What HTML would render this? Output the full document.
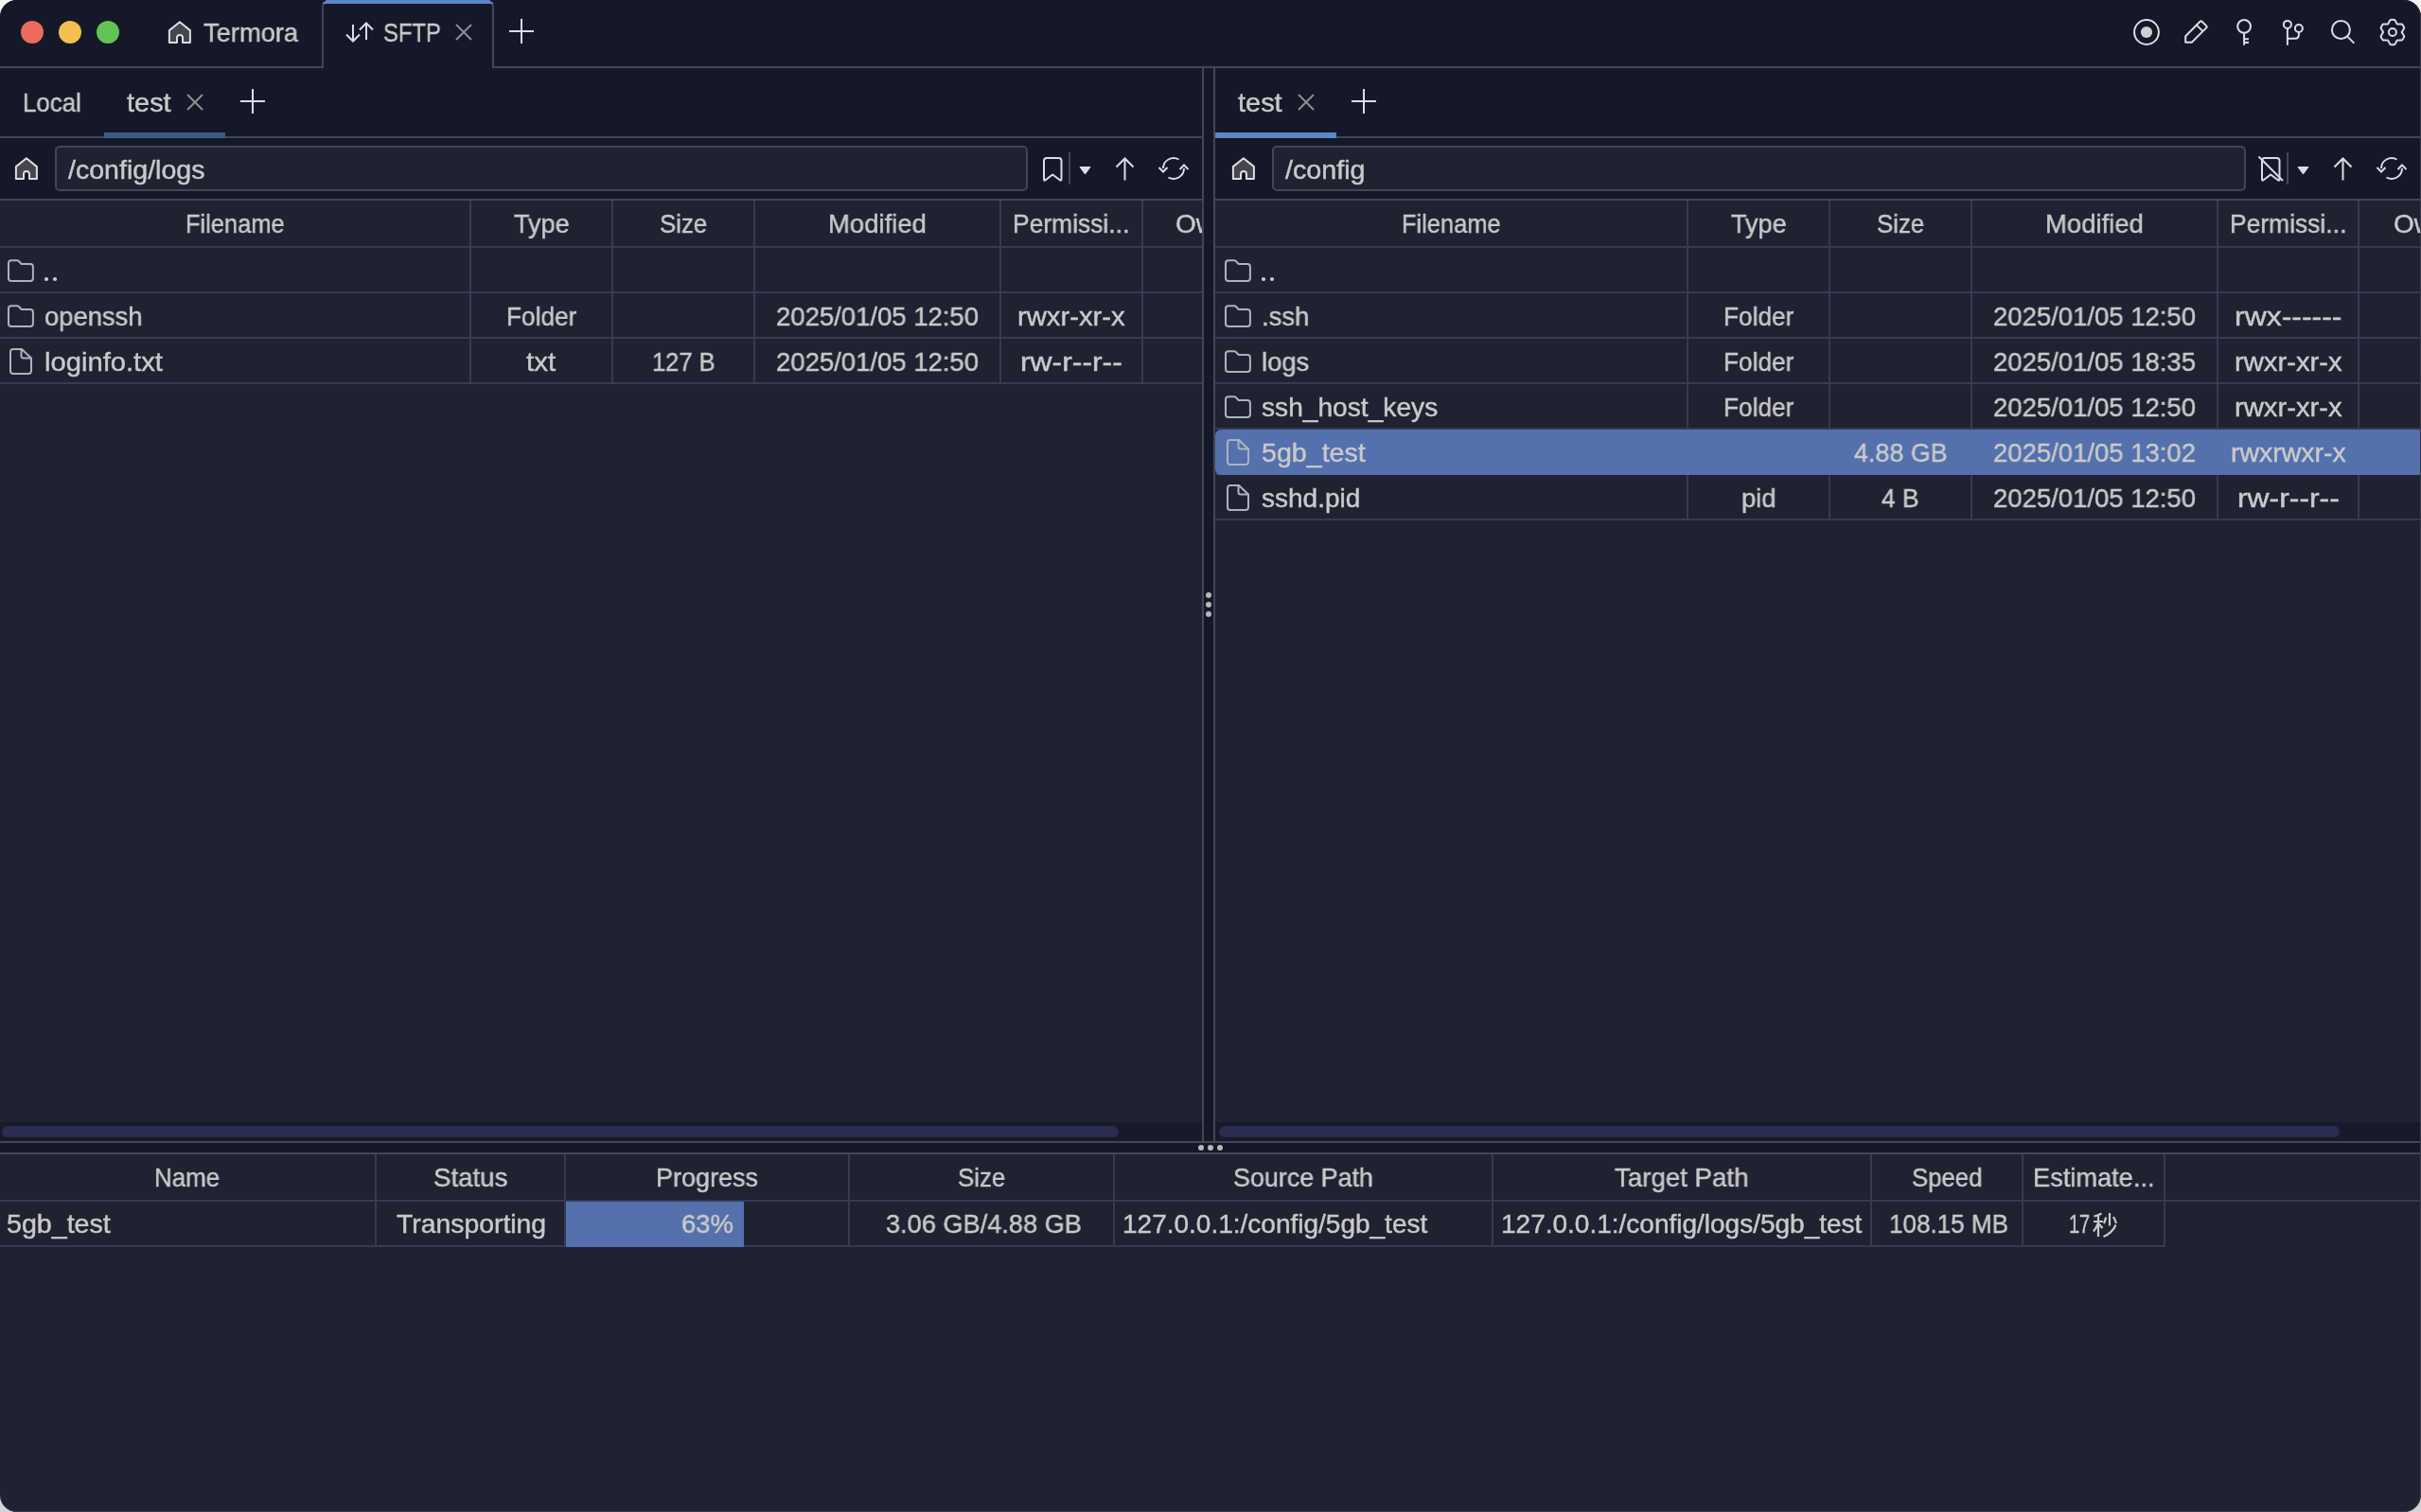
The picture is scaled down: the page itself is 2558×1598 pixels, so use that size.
<!DOCTYPE html>
<html><head><meta charset="utf-8">
<style>
*{margin:0;padding:0;box-sizing:border-box}
html,body{width:2558px;height:1598px;overflow:hidden;background:linear-gradient(#f3f3f4,#d2d4d6)}
#win{position:absolute;left:0;top:0;width:2558px;height:1598px;background:#202232;border-radius:18px;overflow:hidden}
.a{position:absolute}
.t{position:absolute;font-family:"Liberation Sans",sans-serif;font-size:28px;line-height:32px;color:#c9c9c9;white-space:nowrap;transform-origin:0 0;-webkit-text-stroke:0.45px #c9c9c9;will-change:transform}
svg{position:absolute;overflow:visible}
</style></head><body>
<div id="win">
<div class="a" style="left:0px;top:0px;width:2558px;height:72px;background:#151829;"></div>
<div class="a" style="left:0px;top:70px;width:341px;height:2px;background:#454653;"></div>
<div class="a" style="left:521px;top:70px;width:2037px;height:2px;background:#454653;"></div>
<div class="a" style="left:22px;top:22px;width:24px;height:24px;background:#ed6a5e;border-radius:50%"></div>
<div class="a" style="left:62px;top:22px;width:24px;height:24px;background:#f4bf4f;border-radius:50%"></div>
<div class="a" style="left:102px;top:22px;width:24px;height:24px;background:#61c554;border-radius:50%"></div>
<svg style="left:177px;top:22px" width="26" height="25" viewBox="0 0 26 25"><path d="M1.9 10.1 L12.9 1.2 L23.9 10.1 V23 H16 V18.1 A3 3 0 0 0 10 18.1 V23 H1.9 Z" fill="#46464c" stroke="#dcdde2" stroke-width="2" stroke-linejoin="round"/></svg>
<div class="t" style="left:215.20px;top:19px;transform:scaleX(0.9748);">Termora</div>
<div class="a" style="left:340px;top:0;width:182px;height:72px;border:2px solid #454653;border-bottom:none;border-radius:8px 8px 0 0;background:#151829"></div>
<svg style="left:340px;top:0px" width="182" height="4" viewBox="0 0 182 4"><path d="M5 0 H177 L182 4 H0 Z" fill="#5a87c8"/></svg>
<svg style="left:365px;top:23px" width="30" height="22" viewBox="0 0 30 22"><path d="M8 3 V20.5 M1 13.5 L8 20.5 L15 13.5 M22 19 V1.5 M15 8.5 L22 1.5 L29 8.5" fill="none" stroke="#dcdde2" stroke-width="2"/></svg>
<div class="t" style="left:404.60px;top:19px;transform:scaleX(0.8486);">SFTP</div>
<svg style="left:481px;top:25px" width="18" height="18" viewBox="0 0 18 18"><path d="M1 1 L17 17 M17 1 L1 17" stroke="#8e8e8e" stroke-width="2"/></svg>
<svg style="left:538px;top:20px" width="26" height="26" viewBox="0 0 26 26"><path d="M13.0 0 V26 M0 13.0 H26" stroke="#dcdde2" stroke-width="2"/></svg>
<svg style="left:2252px;top:18px" width="32" height="32" viewBox="0 0 32 32"><circle cx="16" cy="16" r="12.9" fill="none" stroke="#dcdde2" stroke-width="2"/><circle cx="16" cy="16" r="6.1" fill="#cfd0d4"/></svg>
<svg style="left:2307px;top:20px" width="28" height="28" viewBox="0 0 28 28"><path d="M2.2 18.2 L17.6 2.8 Q18.6 1.8 19.6 2.8 L24.2 7.4 Q25.2 8.4 24.2 9.4 L8.8 24.8 H2.2 Z M14 6.6 L19.8 12.4" fill="none" stroke="#dcdde2" stroke-width="2" stroke-linejoin="round"/></svg>
<svg style="left:2362px;top:19px" width="20" height="30" viewBox="0 0 20 30"><circle cx="9.1" cy="8.8" r="6.9" fill="none" stroke="#dcdde2" stroke-width="2"/><path d="M9.1 15.7 V28.8 M9.1 22.3 H14 M9.1 26 H14" fill="none" stroke="#dcdde2" stroke-width="2"/></svg>
<svg style="left:2410px;top:19px" width="26" height="30" viewBox="0 0 26 30"><circle cx="6.9" cy="6.9" r="4" fill="none" stroke="#dcdde2" stroke-width="2"/><circle cx="18.9" cy="11" r="4" fill="none" stroke="#dcdde2" stroke-width="2"/><path d="M6.9 10.9 V28.8 M6.9 21.8 H14.9 Q18.9 21.8 18.9 17.8 V15" fill="none" stroke="#dcdde2" stroke-width="2"/></svg>
<svg style="left:2460px;top:18px" width="30" height="30" viewBox="0 0 30 30"><circle cx="13.4" cy="13.5" r="9.5" fill="none" stroke="#dcdde2" stroke-width="2"/><path d="M20.3 20.6 L27.3 27.6" stroke="#dcdde2" stroke-width="2"/></svg>
<svg style="left:2512px;top:18px" width="32" height="32" viewBox="0 0 32 32"><path d="M11.59 6.32 L13.61 3.00 A13.2 13.2 0 0 1 18.19 3.00 L20.21 6.32 Q20.46 8.11 22.13 7.42 L26.01 7.52 A13.2 13.2 0 0 1 28.30 11.49 L26.44 14.89 Q25.02 16.00 26.44 17.11 L28.30 20.51 A13.2 13.2 0 0 1 26.01 24.48 L22.13 24.58 Q20.46 23.89 20.21 25.68 L18.19 29.00 A13.2 13.2 0 0 1 13.61 29.00 L11.59 25.68 Q11.34 23.89 9.67 24.58 L5.79 24.48 A13.2 13.2 0 0 1 3.50 20.51 L5.36 17.11 Q6.78 16.00 5.36 14.89 L3.50 11.49 A13.2 13.2 0 0 1 5.79 7.52 L9.67 7.42 Q11.34 8.11 11.59 6.32 Z" fill="none" stroke="#dcdde2" stroke-width="2" stroke-linejoin="round"/><circle cx="15.9" cy="16" r="4" fill="none" stroke="#dcdde2" stroke-width="2"/></svg>
<div class="a" style="left:0px;top:72px;width:2558px;height:140px;background:#151829;"></div>
<div class="a" style="left:1270px;top:72px;width:14px;height:1136px;background:#151829;"></div>
<div class="a" style="left:0px;top:144px;width:1270px;height:2px;background:#454653;"></div>
<div class="a" style="left:1284px;top:144px;width:1274px;height:2px;background:#454653;"></div>
<div class="a" style="left:0px;top:210px;width:1270px;height:2px;background:#454653;"></div>
<div class="a" style="left:1284px;top:210px;width:1274px;height:2px;background:#454653;"></div>
<div class="t" style="left:23.50px;top:93px;transform:scaleX(0.9224);">Local</div>
<div class="t" style="left:134.40px;top:93px;transform:scaleX(1.0333);">test</div>
<svg style="left:197px;top:99px" width="18" height="18" viewBox="0 0 18 18"><path d="M1 1 L17 17 M17 1 L1 17" stroke="#8e8e8e" stroke-width="2"/></svg>
<svg style="left:254px;top:94px" width="26" height="26" viewBox="0 0 26 26"><path d="M13.0 0 V26 M0 13.0 H26" stroke="#dcdde2" stroke-width="2"/></svg>
<div class="a" style="left:110px;top:140px;width:128px;height:6px;background:#3d5a88;"></div>
<div class="t" style="left:1308.40px;top:93px;transform:scaleX(1.0333);">test</div>
<svg style="left:1371px;top:99px" width="18" height="18" viewBox="0 0 18 18"><path d="M1 1 L17 17 M17 1 L1 17" stroke="#8e8e8e" stroke-width="2"/></svg>
<svg style="left:1428px;top:94px" width="26" height="26" viewBox="0 0 26 26"><path d="M13.0 0 V26 M0 13.0 H26" stroke="#dcdde2" stroke-width="2"/></svg>
<div class="a" style="left:1284px;top:140px;width:128px;height:6px;background:#5b87c9;"></div>
<svg style="left:15px;top:166px" width="26" height="25" viewBox="0 0 26 25"><path d="M1.9 10.1 L12.9 1.2 L23.9 10.1 V23 H16 V18.1 A3 3 0 0 0 10 18.1 V23 H1.9 Z" fill="#46464c" stroke="#dcdde2" stroke-width="2" stroke-linejoin="round"/></svg>
<div class="a" style="left:58px;top:154px;width:1028px;height:48px;border:2px solid #454653;border-radius:5px;background:#202232"></div>
<div class="t" style="left:71.90px;top:164px;transform:scaleX(1.0204);">/config/logs</div>
<svg style="left:1101px;top:165.5px" width="23" height="27" viewBox="0 0 23 27"><path d="M2 23.5 V4 Q2 1 5 1 H17.5 Q20.5 1 20.5 4 V23.5 Q20.5 25.5 18.5 24 L11.2 18.5 L4 24 Q2 25.5 2 23.5 Z" fill="none" stroke="#dcdde2" stroke-width="2" stroke-linejoin="round"/></svg>
<div class="a" style="left:1129px;top:161px;width:2px;height:34px;background:#454653;"></div>
<svg style="left:1140px;top:175.5px" width="13" height="9" viewBox="0 0 13 9"><path d="M1 0.5 H12 L6.5 8 Z" fill="#dcdde2" stroke="#dcdde2" stroke-width="1" stroke-linejoin="round"/></svg>
<svg style="left:1179px;top:165.5px" width="20" height="25" viewBox="0 0 20 25"><path d="M9.5 24.5 V1.5 M0.5 10.5 L9.5 1.5 L18.5 10.5" fill="none" stroke="#dcdde2" stroke-width="2"/></svg>
<svg style="left:1222px;top:160px" width="36" height="36" viewBox="0 0 36 36"><path d="M7 18 A11 11 0 0 1 23.5 8.5 M29 18 A11 11 0 0 1 12.5 27.5 M2.5 17 L7 21.5 L11.5 17 M24.5 19 L29 14.5 L33.5 19" fill="none" stroke="#dcdde2" stroke-width="2"/></svg>
<svg style="left:1301px;top:166px" width="26" height="25" viewBox="0 0 26 25"><path d="M1.9 10.1 L12.9 1.2 L23.9 10.1 V23 H16 V18.1 A3 3 0 0 0 10 18.1 V23 H1.9 Z" fill="#46464c" stroke="#dcdde2" stroke-width="2" stroke-linejoin="round"/></svg>
<div class="a" style="left:1344px;top:154px;width:1029px;height:48px;border:2px solid #454653;border-radius:5px;background:#202232"></div>
<div class="t" style="left:1357.80px;top:164px;transform:scaleX(1.0241);">/config</div>
<svg style="left:2388px;top:165.5px" width="23" height="27" viewBox="0 0 23 27"><path d="M2 23.5 V4 Q2 1 5 1 H17.5 Q20.5 1 20.5 4 V23.5 Q20.5 25.5 18.5 24 L11.2 18.5 L4 24 Q2 25.5 2 23.5 Z" fill="none" stroke="#dcdde2" stroke-width="2" stroke-linejoin="round"/><path d="M-1.5 -0.5 L24 25" stroke="#dcdde2" stroke-width="2"/></svg>
<div class="a" style="left:2416px;top:161px;width:2px;height:34px;background:#454653;"></div>
<svg style="left:2427px;top:175.5px" width="13" height="9" viewBox="0 0 13 9"><path d="M1 0.5 H12 L6.5 8 Z" fill="#dcdde2" stroke="#dcdde2" stroke-width="1" stroke-linejoin="round"/></svg>
<svg style="left:2466px;top:165.5px" width="20" height="25" viewBox="0 0 20 25"><path d="M9.5 24.5 V1.5 M0.5 10.5 L9.5 1.5 L18.5 10.5" fill="none" stroke="#dcdde2" stroke-width="2"/></svg>
<svg style="left:2509px;top:160px" width="36" height="36" viewBox="0 0 36 36"><path d="M7 18 A11 11 0 0 1 23.5 8.5 M29 18 A11 11 0 0 1 12.5 27.5 M2.5 17 L7 21.5 L11.5 17 M24.5 19 L29 14.5 L33.5 19" fill="none" stroke="#dcdde2" stroke-width="2"/></svg>
<div class="a" style="left:0px;top:212px;width:1270px;height:974px;background:#202232;"></div>
<div class="a" style="left:0px;top:260px;width:1270px;height:2px;background:#363a55;"></div>
<div class="a" style="left:0px;top:308px;width:1270px;height:2px;background:#363a55;"></div>
<div class="a" style="left:0px;top:356px;width:1270px;height:2px;background:#363a55;"></div>
<div class="a" style="left:0px;top:404px;width:1270px;height:2px;background:#363a55;"></div>
<div class="a" style="left:496px;top:212px;width:2px;height:194px;background:#363a55;"></div>
<div class="a" style="left:646px;top:212px;width:2px;height:194px;background:#363a55;"></div>
<div class="a" style="left:796px;top:212px;width:2px;height:194px;background:#363a55;"></div>
<div class="a" style="left:1056px;top:212px;width:2px;height:194px;background:#363a55;"></div>
<div class="a" style="left:1206px;top:212px;width:2px;height:194px;background:#363a55;"></div>
<div class="t" style="left:195.75px;top:221px;transform:scaleX(0.9087);">Filename</div>
<div class="t" style="left:542.55px;top:221px;transform:scaleX(0.9656);">Type</div>
<div class="t" style="left:697.20px;top:221px;transform:scaleX(0.9185);">Size</div>
<div class="t" style="left:875.00px;top:221px;transform:scaleX(0.9811);">Modified</div>
<div class="t" style="left:1070.15px;top:221px;transform:scaleX(0.9443);">Permissi...</div>
<div class="t" style="left:1242.00px;top:221px;">Owner</div>
<svg style="left:8px;top:273px" width="29" height="25" viewBox="0 0 29 25"><path d="M1 21 V5.2 Q1 2.2 4 2.2 H10.3 Q11 2.2 11.6 2.8 L14.7 6 H24 Q26.9 6 26.9 9 V21 Q26.9 24 24 24 H4 Q1 24 1 21 Z" fill="none" stroke="#aab4bd" stroke-width="2" stroke-linejoin="round"/></svg>
<div class="a" style="left:47.3px;top:293.09999999999997px;width:3.6px;height:3.6px;background:#c9c9c9;border-radius:50%"></div>
<div class="a" style="left:56.3px;top:293.09999999999997px;width:3.6px;height:3.6px;background:#c9c9c9;border-radius:50%"></div>
<svg style="left:8px;top:321px" width="29" height="25" viewBox="0 0 29 25"><path d="M1 21 V5.2 Q1 2.2 4 2.2 H10.3 Q11 2.2 11.6 2.8 L14.7 6 H24 Q26.9 6 26.9 9 V21 Q26.9 24 24 24 H4 Q1 24 1 21 Z" fill="none" stroke="#aab4bd" stroke-width="2" stroke-linejoin="round"/></svg>
<div class="t" style="left:47.30px;top:319px;transform:scaleX(0.9783);">openssh</div>
<div class="t" style="left:535.00px;top:319px;transform:scaleX(0.9367);">Folder</div>
<div class="t" style="left:820.00px;top:319px;transform:scaleX(0.9817);">2025/01/05 12:50</div>
<div class="t" style="left:1075.10px;top:319px;transform:scaleX(1.0440);">rwxr-xr-x</div>
<svg style="left:10px;top:368px" width="25" height="28" viewBox="0 0 25 28"><path d="M1 4 Q1 1 4 1 H13 L23 10.5 V24 Q23 27 20 27 H4 Q1 27 1 24 Z M12.5 1.5 V8 Q12.5 10.5 15 10.5 H23" fill="none" stroke="#aab4bd" stroke-width="2" stroke-linejoin="round"/></svg>
<div class="t" style="left:47.30px;top:367px;transform:scaleX(1.0417);">loginfo.txt</div>
<div class="t" style="left:556.20px;top:367px;transform:scaleX(1.0533);">txt</div>
<div class="t" style="left:688.80px;top:367px;transform:scaleX(0.9096);">127 B</div>
<div class="t" style="left:820.00px;top:367px;transform:scaleX(0.9817);">2025/01/05 12:50</div>
<div class="t" style="left:1078.00px;top:367px;transform:scaleX(1.1368);">rw-r--r--</div>
<div class="a" style="left:1284px;top:212px;width:1274px;height:974px;background:#202232;"></div>
<div class="a" style="left:1284px;top:260px;width:1274px;height:2px;background:#363a55;"></div>
<div class="a" style="left:1284px;top:308px;width:1274px;height:2px;background:#363a55;"></div>
<div class="a" style="left:1284px;top:356px;width:1274px;height:2px;background:#363a55;"></div>
<div class="a" style="left:1284px;top:404px;width:1274px;height:2px;background:#363a55;"></div>
<div class="a" style="left:1284px;top:452px;width:1274px;height:2px;background:#363a55;"></div>
<div class="a" style="left:1284px;top:500px;width:1274px;height:2px;background:#363a55;"></div>
<div class="a" style="left:1284px;top:548px;width:1274px;height:2px;background:#363a55;"></div>
<div class="a" style="left:1782px;top:212px;width:2px;height:338px;background:#363a55;"></div>
<div class="a" style="left:1932px;top:212px;width:2px;height:338px;background:#363a55;"></div>
<div class="a" style="left:2082px;top:212px;width:2px;height:338px;background:#363a55;"></div>
<div class="a" style="left:2342px;top:212px;width:2px;height:338px;background:#363a55;"></div>
<div class="a" style="left:2491px;top:212px;width:2px;height:338px;background:#363a55;"></div>
<div class="t" style="left:1480.75px;top:221px;transform:scaleX(0.9087);">Filename</div>
<div class="t" style="left:1828.55px;top:221px;transform:scaleX(0.9656);">Type</div>
<div class="t" style="left:1983.20px;top:221px;transform:scaleX(0.9185);">Size</div>
<div class="t" style="left:2161.00px;top:221px;transform:scaleX(0.9811);">Modified</div>
<div class="t" style="left:2355.65px;top:221px;transform:scaleX(0.9443);">Permissi...</div>
<div class="t" style="left:2528.50px;top:221px;">Owner</div>
<svg style="left:1294px;top:273px" width="29" height="25" viewBox="0 0 29 25"><path d="M1 21 V5.2 Q1 2.2 4 2.2 H10.3 Q11 2.2 11.6 2.8 L14.7 6 H24 Q26.9 6 26.9 9 V21 Q26.9 24 24 24 H4 Q1 24 1 21 Z" fill="none" stroke="#aab4bd" stroke-width="2" stroke-linejoin="round"/></svg>
<div class="a" style="left:1333.0px;top:293.09999999999997px;width:3.6px;height:3.6px;background:#c9c9c9;border-radius:50%"></div>
<div class="a" style="left:1342.0px;top:293.09999999999997px;width:3.6px;height:3.6px;background:#c9c9c9;border-radius:50%"></div>
<svg style="left:1294px;top:321px" width="29" height="25" viewBox="0 0 29 25"><path d="M1 21 V5.2 Q1 2.2 4 2.2 H10.3 Q11 2.2 11.6 2.8 L14.7 6 H24 Q26.9 6 26.9 9 V21 Q26.9 24 24 24 H4 Q1 24 1 21 Z" fill="none" stroke="#aab4bd" stroke-width="2" stroke-linejoin="round"/></svg>
<div class="t" style="left:1333.00px;top:319px;transform:scaleX(0.9804);">.ssh</div>
<div class="t" style="left:1821.00px;top:319px;transform:scaleX(0.9367);">Folder</div>
<div class="t" style="left:2106.00px;top:319px;transform:scaleX(0.9817);">2025/01/05 12:50</div>
<div class="t" style="left:2360.50px;top:319px;transform:scaleX(1.1400);">rwx------</div>
<svg style="left:1294px;top:369px" width="29" height="25" viewBox="0 0 29 25"><path d="M1 21 V5.2 Q1 2.2 4 2.2 H10.3 Q11 2.2 11.6 2.8 L14.7 6 H24 Q26.9 6 26.9 9 V21 Q26.9 24 24 24 H4 Q1 24 1 21 Z" fill="none" stroke="#aab4bd" stroke-width="2" stroke-linejoin="round"/></svg>
<div class="t" style="left:1333.00px;top:367px;transform:scaleX(0.9804);">logs</div>
<div class="t" style="left:1821.00px;top:367px;transform:scaleX(0.9367);">Folder</div>
<div class="t" style="left:2106.00px;top:367px;transform:scaleX(0.9817);">2025/01/05 18:35</div>
<div class="t" style="left:2360.60px;top:367px;transform:scaleX(1.0440);">rwxr-xr-x</div>
<svg style="left:1294px;top:417px" width="29" height="25" viewBox="0 0 29 25"><path d="M1 21 V5.2 Q1 2.2 4 2.2 H10.3 Q11 2.2 11.6 2.8 L14.7 6 H24 Q26.9 6 26.9 9 V21 Q26.9 24 24 24 H4 Q1 24 1 21 Z" fill="none" stroke="#aab4bd" stroke-width="2" stroke-linejoin="round"/></svg>
<div class="t" style="left:1333.00px;top:415px;transform:scaleX(1.0054);">ssh_host_keys</div>
<div class="t" style="left:1821.00px;top:415px;transform:scaleX(0.9367);">Folder</div>
<div class="t" style="left:2106.00px;top:415px;transform:scaleX(0.9817);">2025/01/05 12:50</div>
<div class="t" style="left:2360.60px;top:415px;transform:scaleX(1.0440);">rwxr-xr-x</div>
<div class="a" style="left:1284px;top:454px;width:1284px;height:48px;background:#5470ad;border-radius:6px 0 0 6px"></div>
<svg style="left:1296px;top:464px" width="25" height="28" viewBox="0 0 25 28"><path d="M1 4 Q1 1 4 1 H13 L23 10.5 V24 Q23 27 20 27 H4 Q1 27 1 24 Z M12.5 1.5 V8 Q12.5 10.5 15 10.5 H23" fill="none" stroke="#aab4bd" stroke-width="2" stroke-linejoin="round"/></svg>
<div class="t" style="left:1333.00px;top:463px;transform:scaleX(1.0222);">5gb_test</div>
<div class="t" style="left:1958.50px;top:463px;transform:scaleX(0.9612);">4.88 GB</div>
<div class="t" style="left:2106.00px;top:463px;transform:scaleX(0.9817);">2025/01/05 13:02</div>
<div class="t" style="left:2356.50px;top:463px;transform:scaleX(1.0167);">rwxrwxr-x</div>
<svg style="left:1296px;top:512px" width="25" height="28" viewBox="0 0 25 28"><path d="M1 4 Q1 1 4 1 H13 L23 10.5 V24 Q23 27 20 27 H4 Q1 27 1 24 Z M12.5 1.5 V8 Q12.5 10.5 15 10.5 H23" fill="none" stroke="#aab4bd" stroke-width="2" stroke-linejoin="round"/></svg>
<div class="t" style="left:1333.00px;top:511px;">sshd.pid</div>
<div class="t" style="left:1839.90px;top:511px;transform:scaleX(0.9784);">pid</div>
<div class="t" style="left:1988.20px;top:511px;transform:scaleX(0.9429);">4 B</div>
<div class="t" style="left:2106.00px;top:511px;transform:scaleX(0.9817);">2025/01/05 12:50</div>
<div class="t" style="left:2363.50px;top:511px;transform:scaleX(1.1368);">rw-r--r--</div>
<div class="a" style="left:1270px;top:72px;width:2px;height:1136px;background:#454653;"></div>
<div class="a" style="left:1272px;top:212px;width:10px;height:996px;background:#151829;"></div>
<div class="a" style="left:1282px;top:72px;width:2px;height:1136px;background:#454653;"></div>
<div class="a" style="left:1274px;top:626px;width:6px;height:6px;background:#b8b8b8;border-radius:50%"></div>
<div class="a" style="left:1274px;top:636px;width:6px;height:6px;background:#b8b8b8;border-radius:50%"></div>
<div class="a" style="left:1274px;top:646px;width:6px;height:6px;background:#b8b8b8;border-radius:50%"></div>
<div class="a" style="left:0px;top:1186px;width:1270px;height:20px;background:#181a2b;"></div>
<div class="a" style="left:1284px;top:1186px;width:1274px;height:20px;background:#181a2b;"></div>
<div class="a" style="left:2px;top:1190px;width:1180px;height:12px;background:#2a2d4f;border-radius:6px"></div>
<div class="a" style="left:1288px;top:1190px;width:1184px;height:12px;background:#2a2d4f;border-radius:6px"></div>
<div class="a" style="left:0px;top:1206px;width:2558px;height:2px;background:#454653;"></div>
<div class="a" style="left:0px;top:1208px;width:2558px;height:10px;background:#151829;"></div>
<div class="a" style="left:0px;top:1218px;width:2558px;height:2px;background:#454653;"></div>
<div class="a" style="left:1266px;top:1210px;width:6px;height:6px;background:#b8b8b8;border-radius:50%"></div>
<div class="a" style="left:1276px;top:1210px;width:6px;height:6px;background:#b8b8b8;border-radius:50%"></div>
<div class="a" style="left:1286px;top:1210px;width:6px;height:6px;background:#b8b8b8;border-radius:50%"></div>
<div class="a" style="left:0px;top:1268px;width:2558px;height:2px;background:#363a55;"></div>
<div class="a" style="left:0px;top:1316px;width:2288px;height:2px;background:#363a55;"></div>
<div class="a" style="left:396px;top:1220px;width:2px;height:98px;background:#363a55;"></div>
<div class="a" style="left:596px;top:1220px;width:2px;height:98px;background:#363a55;"></div>
<div class="a" style="left:896px;top:1220px;width:2px;height:98px;background:#363a55;"></div>
<div class="a" style="left:1176px;top:1220px;width:2px;height:98px;background:#363a55;"></div>
<div class="a" style="left:1576px;top:1220px;width:2px;height:98px;background:#363a55;"></div>
<div class="a" style="left:1976px;top:1220px;width:2px;height:98px;background:#363a55;"></div>
<div class="a" style="left:2136px;top:1220px;width:2px;height:98px;background:#363a55;"></div>
<div class="a" style="left:2286px;top:1220px;width:2px;height:98px;background:#363a55;"></div>
<div class="a" style="left:598px;top:1270px;width:188px;height:48px;background:#5470ad;"></div>
<div class="t" style="left:163.25px;top:1229px;transform:scaleX(0.9267);">Name</div>
<div class="t" style="left:458.00px;top:1229px;transform:scaleX(0.9873);">Status</div>
<div class="t" style="left:693.00px;top:1229px;transform:scaleX(0.9643);">Progress</div>
<div class="t" style="left:1012.15px;top:1229px;transform:scaleX(0.9204);">Size</div>
<div class="t" style="left:1303.10px;top:1229px;transform:scaleX(0.9597);">Source Path</div>
<div class="t" style="left:1706.35px;top:1229px;transform:scaleX(0.9881);">Target Path</div>
<div class="t" style="left:2019.80px;top:1229px;transform:scaleX(0.9185);">Speed</div>
<div class="t" style="left:2147.85px;top:1229px;transform:scaleX(0.9720);">Estimate...</div>
<div class="t" style="left:6.70px;top:1278px;transform:scaleX(1.0222);">5gb_test</div>
<div class="t" style="left:419.00px;top:1278px;transform:scaleX(1.0128);">Transporting</div>
<div class="t" style="left:720.40px;top:1278px;transform:scaleX(0.9768);">63%</div>
<div class="t" style="left:935.60px;top:1278px;transform:scaleX(0.9704);">3.06 GB/4.88 GB</div>
<div class="t" style="left:1186.30px;top:1278px;">127.0.0.1:/config/5gb_test</div>
<div class="t" style="left:1586.20px;top:1278px;">127.0.0.1:/config/logs/5gb_test</div>
<div class="t" style="left:1996.30px;top:1278px;transform:scaleX(0.9304);">108.15 MB</div>
<div class="t" style="left:2185.90px;top:1278px;transform:scaleX(0.7129);">17</div>
<svg style="left:2211px;top:1281px" width="26" height="27" viewBox="0 0 26 27"><g fill="none" stroke="#c9c9c9" stroke-width="2.2" stroke-linecap="butt"><path d="M9.5 1.5 Q6 3.5 1.5 4.5 M1 10 H11 M6 4 V26 M6 11.5 Q4 17 0.8 20.5 M6.5 12.5 Q8.5 14.5 10.5 17"/><path d="M18 1 V14.5 M14 5.5 Q13.5 9 12 12 M22 5 Q24 8.5 25 12 M24.5 13.5 Q21 22 11.5 26"/></g></svg>
<div class="a" style="left:0;top:0;width:2558px;height:1598px;border-right:1px solid #3a3c4c;border-bottom:1px solid #3a3c4c;border-radius:18px"></div>
</div></body></html>
